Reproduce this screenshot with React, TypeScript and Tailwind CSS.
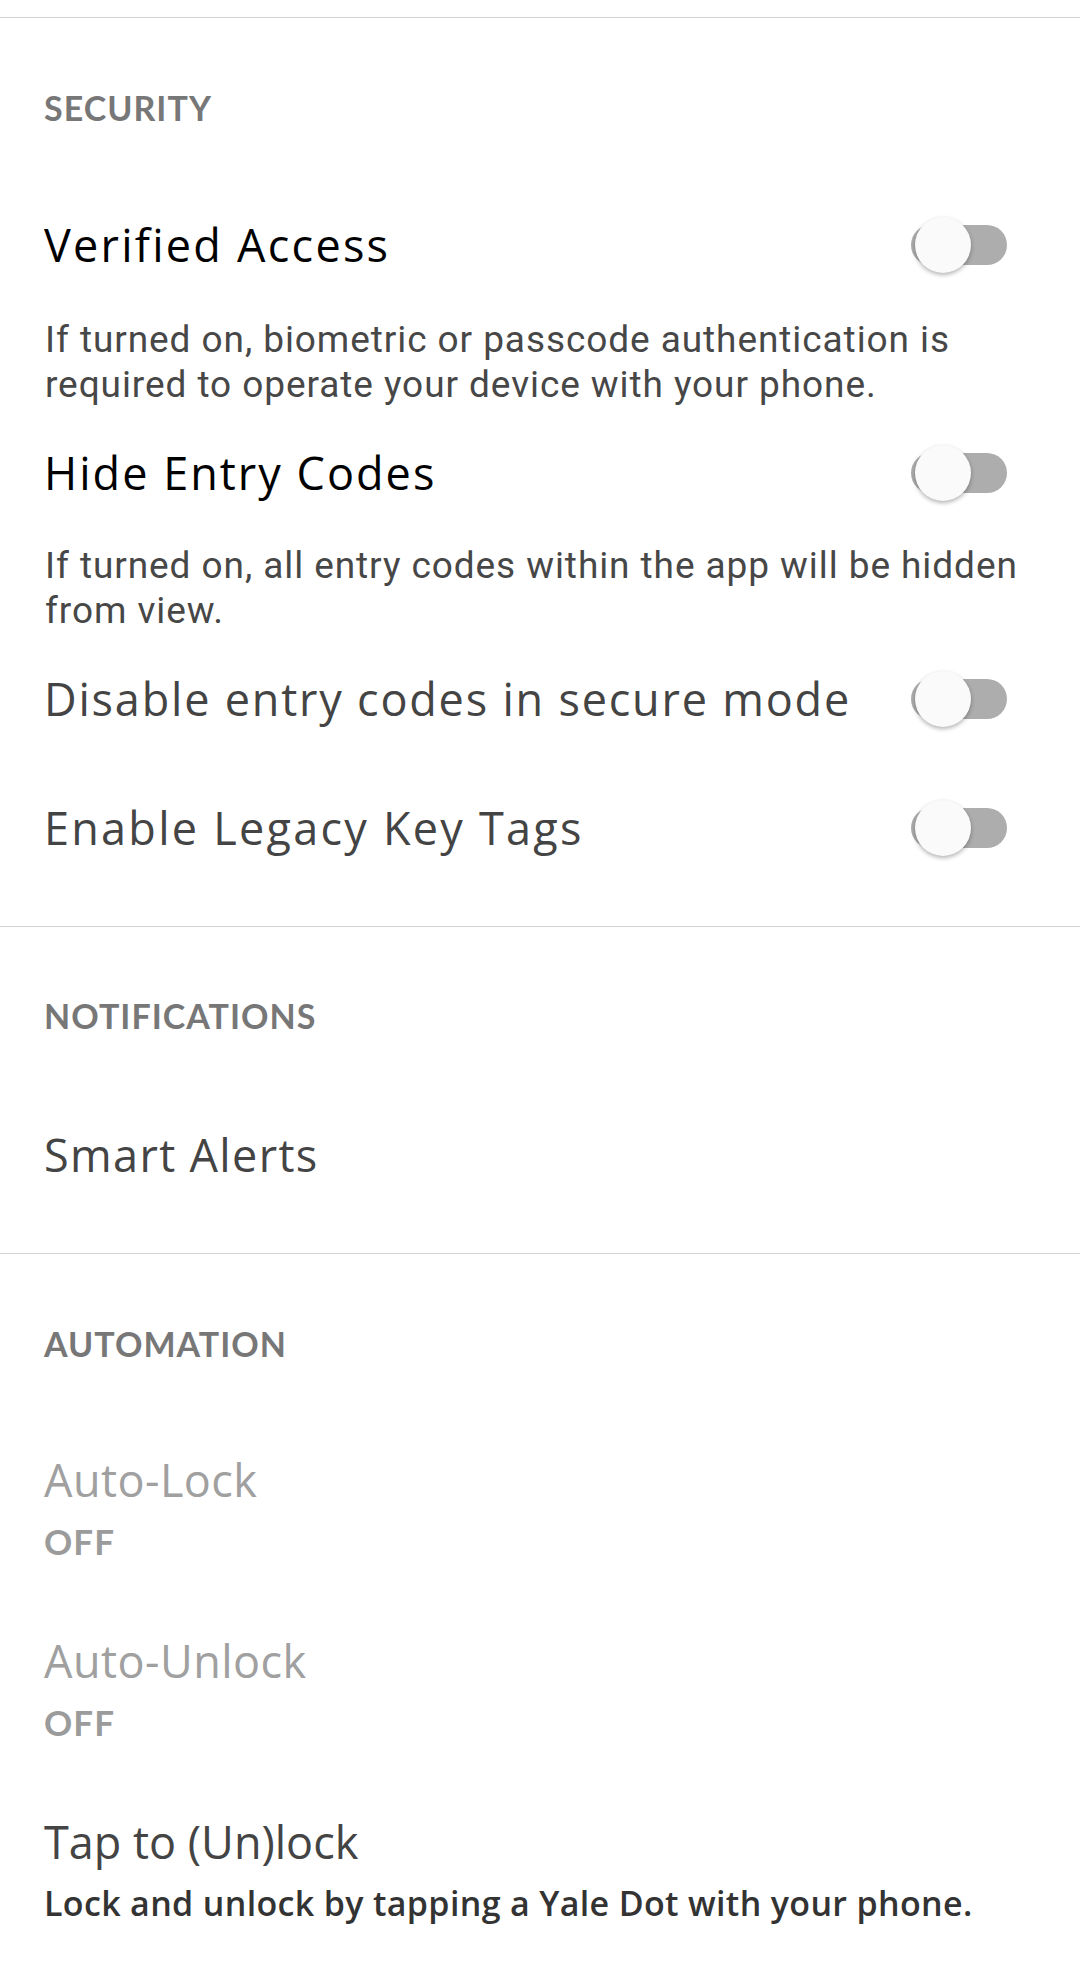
import React from "react";

const title = "font-['Open_Sans','Liberation_Sans',sans-serif]";
const head = "font-['Lato','Liberation_Sans',sans-serif] tracking-[0.03em]";

const Toggle = () => (
  <div className="relative w-[96px] h-[56px] shrink-0">
    <div className="absolute left-[0px] top-[8px] w-[96px] h-[40px] rounded-full bg-[#adadad]" />
    <div className="absolute left-[4px] top-0 w-[56px] h-[56px] rounded-full bg-[#fafafa] shadow-[0_2px_4px_rgba(0,0,0,0.3)]" />
  </div>
);

const Header = ({ children, mt }: { children: React.ReactNode; mt: string }) => (
  <div className={`${mt} h-[60px] flex items-center pl-[44px] ${head} text-[34px] leading-[60px] font-bold text-[#777777]`}>
    {children}
  </div>
);

const ToggleRow = ({ label, cls, mt }: { label: string; cls: string; mt: string }) => (
  <div className={`${mt} h-[90px] flex items-center justify-between pl-[44px] pr-[73px]`}>
    <span className={`${title} text-[45px] leading-[90px] ${cls}`}>{label}</span>
    <Toggle />
  </div>
);

const Desc = ({ children, mt }: { children: React.ReactNode; mt: string }) => (
  <p className={`${mt} pl-[45px] pr-[30px] font-['Roboto',sans-serif] text-[37px] tracking-[0.025em] leading-[45px] text-[#474747]`}>
    {children}
  </p>
);

const Divider = ({ mt }: { mt: string }) => <div className={`${mt} h-px bg-[#d2d2d2]`} />;

const Item = ({ label, sub, labelClass, subClass, mt }: { label: string; sub: string; labelClass: string; subClass: string; mt: string }) => (
  <div className={`${mt} pl-[44px]`}>
    <div className={`h-[60px] flex items-center ${title} text-[45px] leading-[60px] ${labelClass}`}>{label}</div>
    <div className={`mt-[6px] h-[50px] flex items-center leading-[50px] ${subClass}`}>{sub}</div>
  </div>
);

export default function App() {
  return (
    <div className="w-[1080px] h-[1967px] bg-white overflow-hidden">
      <Divider mt="mt-[17px]" />
      <Header mt="mt-[60px]">SECURITY</Header>
      <ToggleRow label="Verified Access" cls="text-[#000000] tracking-[0.05em]" mt="mt-[62px]" />
      <Desc mt="mt-[27px]">
        If turned on, biometric or passcode authentication is required to operate your device with your phone.
      </Desc>
      <ToggleRow label="Hide Entry Codes" cls="text-[#000000] tracking-[0.045em]" mt="mt-[21px]" />
      <Desc mt="mt-[25px]">If turned on, all entry codes within the app will be hidden from view.</Desc>
      <ToggleRow label="Disable entry codes in secure mode" cls="text-[#444444] tracking-[0.04em]" mt="mt-[21px]" />
      <ToggleRow label="Enable Legacy Key Tags" cls="text-[#444444] tracking-[0.05em]" mt="mt-[39px]" />
      <Divider mt="mt-[53px]" />
      <Header mt="mt-[59px]">NOTIFICATIONS</Header>
      <div className={`mt-[64px] h-[90px] flex items-center pl-[44px] ${title} tracking-[0.03em] text-[45px] leading-[90px] text-[#444444]`}>
        Smart Alerts
      </div>
      <Divider mt="mt-[53px]" />
      <Header mt="mt-[60px]">AUTOMATION</Header>
      <Item
        label="Auto-Lock"
        sub="OFF"
        labelClass="text-[#a0a0a0] tracking-[0.01em]"
        subClass={`${head} font-bold text-[35px] text-[#9b9b9b]`}
        mt="mt-[76px]"
      />
      <Item
        label="Auto-Unlock"
        sub="OFF"
        labelClass="text-[#a0a0a0] tracking-[0.01em]"
        subClass={`${head} font-bold text-[35px] text-[#9b9b9b]`}
        mt="mt-[65px]"
      />
      <Item
        label="Tap to (Un)lock"
        sub="Lock and unlock by tapping a Yale Dot with your phone."
        labelClass="text-[#444444]"
        subClass="font-['Open_Sans',sans-serif] font-semibold tracking-[0.01em] text-[34px] text-[#333333]"
        mt="mt-[65px]"
      />
    </div>
  );
}
